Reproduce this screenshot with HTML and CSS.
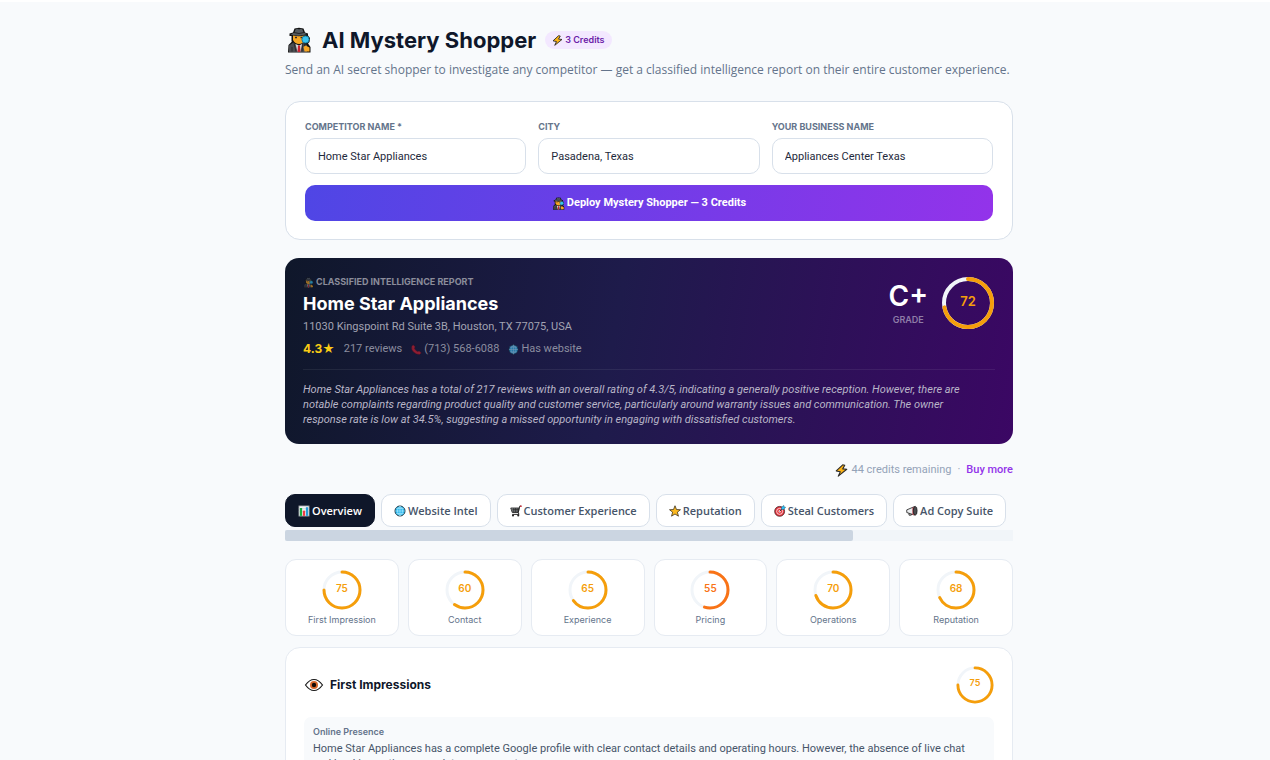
FILE: index.html
```html
<!DOCTYPE html>
<html lang="en">
<head>
<meta charset="utf-8">
<meta name="viewport" content="width=device-width, initial-scale=1">
<title>AI Mystery Shopper</title>
<link rel="stylesheet" href="styles.css">
</head>
<body>
<svg class="sprite" aria-hidden="true">
  <symbol id="detective" viewBox="0 0 24 26">
    <path d="M1 25.500 1.500 18 5 14.500H4.500V9H2.500V6.500L6 5.500 7.500 1.500 12 .8 16.500 1.500 18 5.500 21 6.500V8.500L23 11 22.500 15 21 16.500 23.500 20V25.500Z" fill="#111"/>
    <path d="M7.500 5.500 8.500 2.500Q10.500 1 12 2.500 14 1 15.500 2.500L16.500 5.500 20 7Q12 10 3.500 7.500Z" fill="#555b60"/>
    <path d="M7 5.500Q12 7.500 17 5.500" stroke="#222" stroke-width="1" fill="none"/>
    <path d="M6 8.500Q12 10 17.500 8.500V13Q16 17 12 17T6 13Z" fill="#f6a623"/>
    <path d="M8 10.500H10M13.500 10.500H15.500" stroke="#3b2a20" stroke-width="1.300"/>
    <path d="M2 25V18.500L6.500 15.500 12 20 16 15.500 20 18V25Z" fill="#4a4c50"/>
    <path d="M8.500 17 10.500 24.500H13.500L15 17 12 18.500Z" fill="#d9dadd"/>
    <path d="M11 18.500H13L13.500 24.500 12 25.200 10.500 24.500Z" fill="#c9202f"/>
    <path d="M7 16 9 24.500M16 16 15 24.500M5 20V24.500" stroke="#222" stroke-width=".8"/>
    <circle cx="18.500" cy="12.500" r="3.600" fill="#39c3ee" stroke="#187c9e"/>
    <path d="M18 16.500V20" stroke="#222" stroke-width="1.500"/>
    <path d="M16.500 20 18.500 18.500 22.500 20.500V24.500H17.500Z" fill="#f6a623"/>
  </symbol>
  <symbol id="bolt" viewBox="0 0 16 16">
    <path d="M9.500 1 1.500 8.500 6.500 9.500 4 15 14.500 6.500 9.500 6 12 1.500Z" fill="#fcb316" stroke="#2a2a2a" stroke-width="1.300" stroke-linejoin="round"/>
  </symbol>
  <symbol id="chart" viewBox="0 0 16 16">
    <path d="M1 1H15V15H1Z" fill="#f2f4f5" stroke="#59616a"/>
    <path d="M1 5H15M1 9H15" stroke="#b5bec6" stroke-width=".7"/>
    <path d="M2.500 4H5.500V14.500H2.500Z" fill="#17ad3f"/>
    <path d="M6.500 7.500H9.500V14.500H6.500Z" fill="#ef3b42"/>
    <path d="M10.500 3H13.500V14.500H10.500Z" fill="#269bd9"/>
  </symbol>
  <symbol id="globe" viewBox="0 0 16 16">
    <circle cx="8" cy="8" r="6.700" fill="#2bb9ef" stroke="#17303c" stroke-width="1.200"/>
    <path d="M1.500 8H14.500M8 1.500V14.500M3 4.500H13M3 11.500H13M8 1.500C3.500 5 3.500 11 8 14.500M8 1.500C12.500 5 12.500 11 8 14.500" fill="none" stroke="#c8f2ff" stroke-width=".7"/>
  </symbol>
  <symbol id="cart" viewBox="0 0 16 16">
    <path d="M1 4H12L11 10H3Z" fill="#9aa0a4" stroke="#222" stroke-width="1.100"/>
    <path d="M3 6H12M2.500 8H11.500M5 4V10M7.300 4V10M9.500 4V10" stroke="#222" stroke-width=".9"/>
    <path d="M15 1.500H13L11 10 12 12.500H3" fill="none" stroke="#222" stroke-width="1.300"/>
    <path d="M13.500 1.500H15.500" stroke="#d62f3a" stroke-width="2"/>
    <circle cx="4" cy="14" r="1.400" fill="#222"/><circle cx="11" cy="14" r="1.400" fill="#222"/>
  </symbol>
  <symbol id="star" viewBox="0 0 16 16">
    <path d="M8 1 10 6 15.300 6.300 11.200 9.600 12.600 14.900 8 12 3.400 14.900 4.800 9.600.7 6.300 6 6Z" fill="#fbb81f" stroke="#33291a" stroke-width="1" stroke-linejoin="round"/>
  </symbol>
  <symbol id="target" viewBox="0 0 16 16">
    <circle cx="7.500" cy="8.500" r="6.600" fill="#e5343d" stroke="#3a1d20"/>
    <circle cx="7.500" cy="8.500" r="4" fill="#e5343d" stroke="#fff" stroke-width="1"/>
    <circle cx="7.500" cy="8.500" r="1.500" fill="#fff"/>
    <path d="M7.500 8.500 12 4" stroke="#222" stroke-width="1.100"/>
    <path d="M10 6V3L13 .5 13.500 2.500 15.500 3 13 6Z" fill="#2bb9ef" stroke="#17516a" stroke-width=".6"/>
  </symbol>
  <symbol id="megaphone" viewBox="0 0 16 16">
    <path d="M1 6.500 11.500 2V13.500L1 10Z" fill="#eceef0" stroke="#222" stroke-width="1.100" stroke-linejoin="round"/>
    <path d="M8.500 3.500 11.500 2V13.500L8.500 12.500Z" fill="#b8434d"/>
    <ellipse cx="12.300" cy="7.700" rx="2.500" ry="5.800" fill="#4a4d51" stroke="#1c1c1c"/>
    <path d="M4 11V13.500H7V12" fill="none" stroke="#222" stroke-width="1.200"/>
  </symbol>
  <symbol id="phone" viewBox="0 0 16 16">
    <path d="M3 1 6 4 5 6.500Q6.500 9.500 9.500 11L12 10 15 13 12.500 15.300Q8 15.500 4 12T1 3.500Z" fill="#e0202f" stroke="#5a0f18" stroke-width=".7" stroke-linejoin="round"/>
  </symbol>
  <symbol id="eye" viewBox="0 0 20 16">
    <path d="M1.500 8Q5.500 2.500 10 2.500T18.500 8Q14.500 13.500 10 13.500T1.500 8Z" fill="#fff" stroke="#1a1a1a" stroke-width="1.200"/>
    <circle cx="10" cy="8" r="4" fill="#d9682c"/><circle cx="10" cy="8" r="2.200" fill="#120c0a"/>
  </symbol>
</svg>

<main class="page">
  <header class="page-head">
    <div class="title-row">
      <svg class="icon-hero" aria-hidden="true"><use href="#detective"/></svg>
      <h1>AI Mystery Shopper</h1>
      <span class="badge"><svg class="icon-sm" aria-hidden="true"><use href="#bolt"/></svg>3 Credits</span>
    </div>
    <p class="subtitle">Send an AI secret shopper to investigate any competitor — get a classified intelligence report on their entire customer experience.</p>
  </header>

  <form class="form-card">
    <div class="fields">
      <div class="field"><label for="competitor">Competitor Name *</label><input id="competitor" type="text" value="Home Star Appliances"></div>
      <div class="field"><label for="city">City</label><input id="city" type="text" value="Pasadena, Texas"></div>
      <div class="field"><label for="business">Your Business Name</label><input id="business" type="text" value="Appliances Center Texas"></div>
    </div>
    <button class="deploy" type="button"><svg class="icon" aria-hidden="true"><use href="#detective"/></svg>Deploy Mystery Shopper — 3 Credits</button>
  </form>

  <section class="report">
    <div class="report-top">
      <div class="report-info">
        <div class="eyebrow"><svg class="icon-sm" aria-hidden="true"><use href="#detective"/></svg>Classified Intelligence Report</div>
        <h2>Home Star Appliances</h2>
        <p class="address">11030 Kingspoint Rd Suite 3B, Houston, TX 77075, USA</p>
        <div class="facts">
          <span class="rating">4.3★</span>
          <span>217 reviews</span>
          <span class="fact"><svg class="icon-sm" aria-hidden="true"><use href="#phone"/></svg>(713) 568-6088</span>
          <span class="fact"><svg class="icon-sm" aria-hidden="true"><use href="#globe"/></svg>Has website</span>
        </div>
      </div>
      <div class="report-score">
        <div class="grade"><div class="grade-letter">C+</div><div class="grade-label">Grade</div></div>
        <div class="ring ring-lg">
          <svg viewBox="0 0 52 52"><circle class="track" cx="26" cy="26" r="24"/><circle class="arc" cx="26" cy="26" r="24" pathLength="100" stroke-dasharray="72 100"/></svg>
          <span>72</span>
        </div>
      </div>
    </div>
    <p class="summary">Home Star Appliances has a total of 217 reviews with an overall rating of 4.3/5, indicating a generally positive reception. However, there are<br>notable complaints regarding product quality and customer service, particularly around warranty issues and communication. The owner<br>response rate is low at 34.5%, suggesting a missed opportunity in engaging with dissatisfied customers.</p>
  </section>

  <div class="credits">
    <span class="credits-left"><svg class="icon" aria-hidden="true"><use href="#bolt"/></svg>44 credits remaining</span>
    <span>·</span>
    <a href="#">Buy more</a>
  </div>

  <nav class="tabs">
    <button type="button" class="tab active"><svg class="icon-tab" aria-hidden="true"><use href="#chart"/></svg>Overview</button>
    <button type="button" class="tab"><svg class="icon-tab" aria-hidden="true"><use href="#globe"/></svg>Website Intel</button>
    <button type="button" class="tab"><svg class="icon-tab" aria-hidden="true"><use href="#cart"/></svg>Customer Experience</button>
    <button type="button" class="tab"><svg class="icon-tab" aria-hidden="true"><use href="#star"/></svg>Reputation</button>
    <button type="button" class="tab"><svg class="icon-tab" aria-hidden="true"><use href="#target"/></svg>Steal Customers</button>
    <button type="button" class="tab"><svg class="icon-tab" aria-hidden="true"><use href="#megaphone"/></svg>Ad Copy Suite</button>
  </nav>
  <div class="scrollbar"><div class="thumb"></div></div>

  <div class="scores">
    <div class="score"><div class="ring"><svg viewBox="0 0 40 40"><circle class="track" cx="20" cy="20" r="18"/><circle class="arc" cx="20" cy="20" r="18" pathLength="100" stroke-dasharray="75 100"/></svg><span>75</span></div>First Impression</div>
    <div class="score"><div class="ring"><svg viewBox="0 0 40 40"><circle class="track" cx="20" cy="20" r="18"/><circle class="arc" cx="20" cy="20" r="18" pathLength="100" stroke-dasharray="60 100"/></svg><span>60</span></div>Contact</div>
    <div class="score"><div class="ring"><svg viewBox="0 0 40 40"><circle class="track" cx="20" cy="20" r="18"/><circle class="arc" cx="20" cy="20" r="18" pathLength="100" stroke-dasharray="65 100"/></svg><span>65</span></div>Experience</div>
    <div class="score"><div class="ring low"><svg viewBox="0 0 40 40"><circle class="track" cx="20" cy="20" r="18"/><circle class="arc" cx="20" cy="20" r="18" pathLength="100" stroke-dasharray="55 100"/></svg><span>55</span></div>Pricing</div>
    <div class="score"><div class="ring"><svg viewBox="0 0 40 40"><circle class="track" cx="20" cy="20" r="18"/><circle class="arc" cx="20" cy="20" r="18" pathLength="100" stroke-dasharray="70 100"/></svg><span>70</span></div>Operations</div>
    <div class="score"><div class="ring"><svg viewBox="0 0 40 40"><circle class="track" cx="20" cy="20" r="18"/><circle class="arc" cx="20" cy="20" r="18" pathLength="100" stroke-dasharray="68 100"/></svg><span>68</span></div>Reputation</div>
  </div>

  <section class="detail">
    <div class="detail-head">
      <h3><svg class="icon-eye" aria-hidden="true"><use href="#eye"/></svg>First Impressions</h3>
      <div class="ring ring-sm"><svg viewBox="0 0 40 40"><circle class="track" cx="20" cy="20" r="18"/><circle class="arc" cx="20" cy="20" r="18" pathLength="100" stroke-dasharray="75 100"/></svg><span>75</span></div>
    </div>
    <div class="note">
      <h4>Online Presence</h4>
      <p>Home Star Appliances has a complete Google profile with clear contact details and operating hours. However, the absence of live chat<br>and booking options may deter some customers.</p>
    </div>
  </section>
</main>
</body>
</html>
```
FILE: styles.css
```css
* { box-sizing: border-box; }
html { height: 100%; overflow: hidden; }
body {
  margin: 0;
  height: 100%;
  overflow: hidden;
  padding-left: 28px;
  border-top: 2px solid #fff;
  background: #f8fafc;
  color: #0f172a;
  font: 11px/16px Roboto, "Liberation Sans", sans-serif;
}
h1, h2, h3, h4, p { margin: 0; }
button, input { font: inherit; }
svg { display: block; flex: none; }
.sprite { position: absolute; width: 0; height: 0; }
.page { max-width: 728px; margin: 0 auto; padding-top: 22px; }

.icon { width: 13px; height: 13px; }
.icon-tab { width: 12px; height: 12px; }
.icon-sm { width: 11px; height: 11px; }
.icon-hero { width: 28px; height: 26px; }
.icon-eye { width: 20px; height: 16px; }

.title-row { display: flex; align-items: center; gap: 9px; height: 32px; }
h1 { font: 700 22px/32px Inter, sans-serif; }
.badge {
  display: flex; align-items: center; gap: 2px;
  padding: 1px 7px; border-radius: 9px;
  background: #f3e8ff; color: #6b21a8;
  font: 600 9px/16px Inter, sans-serif;
}
.subtitle { margin-top: 5px; color: #64748b; font: 12px/18px "Open Sans", sans-serif; white-space: nowrap; }

.form-card { margin-top: 22px; padding: 18px 19px; border: 1px solid #d8e0ea; border-radius: 15px; background: #fff; }
.fields { display: grid; grid-template-columns: repeat(3, 1fr); gap: 12px; }
.field label { display: block; margin-bottom: 4px; color: #64748b; font: 700 9px/14px Inter, sans-serif; text-transform: uppercase; }
.field input {
  display: block; width: 100%; height: 36px; padding: 0 12px;
  border: 1px solid #d8e0ea; border-radius: 10px;
  background: #fff; color: #1e293b; outline: none;
}
.deploy {
  display: flex; align-items: center; justify-content: center; gap: 2px;
  width: 100%; height: 36px; margin-top: 11px; border: 0; border-radius: 10px;
  background: linear-gradient(100deg, #4f46e5, #9333ea);
  color: #fff; font-weight: 700;
}

.report {
  margin-top: 18px; padding: 18px 18px 17px; border-radius: 14px;
  background: linear-gradient(100deg, #0f172a, #1e1b4b 45%, #3b0764);
  color: #fff;
}
.report-top { display: flex; justify-content: space-between; }
.eyebrow { display: flex; align-items: center; gap: 2px; color: #8b8d9b; font: 700 9px/12px Inter, sans-serif; text-transform: uppercase; }
.eyebrow svg, .fact svg { opacity: .6; }
h2 { margin-top: 2px; font: 700 18px/27px Inter, sans-serif; }
.address { margin-top: 2px; color: #a2a3b2; }
.facts { display: flex; align-items: center; gap: 9px; margin-top: 6px; color: #8b8d9f; }
.fact { display: flex; align-items: center; gap: 2px; }
.rating { color: #facc15; font: 700 12px/16px Inter, "DejaVu Sans", sans-serif; }
.report-score { display: flex; align-items: flex-start; gap: 14px; padding: 1px 1px 0 0; }
.grade { text-align: center; }
.grade-letter { font: 600 28px/38px Inter, sans-serif; }
.grade-label { color: #8e7ca7; font: 600 9px/10px Inter, sans-serif; text-transform: uppercase; }
.summary { margin-top: 12px; padding-top: 12px; border-top: 1px solid rgba(255, 255, 255, .07); color: #b9b6c8; font-style: italic; line-height: 15px; }

.ring { display: grid; place-items: center; width: 40px; height: 40px; color: #f59e0b; font: 600 10px/14px Inter, sans-serif; }
.ring > * { grid-area: 1 / 1; }
.ring span { padding-bottom: 4px; }
.ring svg { width: 100%; height: 100%; transform: rotate(-90deg); }
.ring circle { fill: none; stroke-width: 3; }
.ring .track { stroke: #f1f5f9; }
.ring .arc { stroke: currentColor; stroke-linecap: round; }
.ring.low { color: #f97316; }
.ring-lg { width: 52px; height: 52px; font-size: 13px; }
.ring-lg circle { stroke-width: 4; }
.ring-sm { width: 38px; height: 38px; font-size: 9px; }

.credits { display: flex; align-items: center; justify-content: flex-end; gap: 6px; margin-top: 18px; color: #94a3b8; }
.credits-left { display: flex; align-items: center; gap: 3px; }
.credits a { color: #9333ea; font-weight: 500; text-decoration: none; }

.tabs { display: flex; gap: 6px; margin-top: 16px; overflow: hidden; }
.tab {
  display: flex; align-items: center; gap: 2px; flex: none;
  height: 33px; padding: 0 12px;
  border: 1px solid #d8e0ea; border-radius: 10px;
  background: #fff; color: #475569;
  font: 600 11px/16px "Open Sans", sans-serif; white-space: nowrap;
}
.tab.active { border-color: #0f172a; background: #0f172a; color: #fff; }
.scrollbar { height: 11px; margin-top: 3px; background: #f1f5f9; }
.thumb { width: 78%; height: 11px; border-radius: 2px; background: #cbd5e1; }

.scores { display: grid; grid-template-columns: repeat(6, 1fr); gap: 9px; margin-top: 18px; }
.score {
  display: flex; flex-direction: column; align-items: center; gap: 2px;
  padding: 10px 4px 8px; border: 1px solid #e6ebf2; border-radius: 11px;
  background: #fff; color: #64748b; font: 9px/15px Inter, sans-serif;
}

.detail { margin-top: 11px; padding: 18px; border: 1px solid #e6ebf2; border-radius: 15px; background: #fff; }
.detail-head { display: flex; align-items: center; justify-content: space-between; }
h3 { display: flex; align-items: center; gap: 6px; font: 700 12px/18px Inter, sans-serif; }
.note { margin-top: 13px; padding: 8px 9px; border-radius: 7px; background: #f8fafc; color: #475569; line-height: 15px; }
h4 { margin-bottom: 2px; color: #64748b; font: 600 9px/14px Inter, sans-serif; }
```
